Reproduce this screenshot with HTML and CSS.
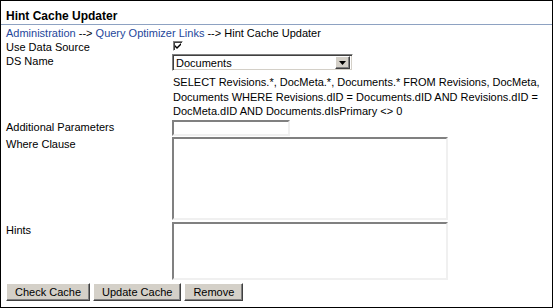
FILE: index.html
```html
<!DOCTYPE html>
<html lang="en">
<head>
	<meta charset="UTF-8">
	<title>Hint Cache Updater</title>
	<link rel="stylesheet" href="styles.css">
</head>
<body class="body">
	<div class="frame">
		<h1 class="title">Hint Cache Updater</h1>
		<form class="form">
			<div class="crumbs">
				<a class="link" href="#">Administration</a> --&gt; <a class="link" href="#">Query Optimizer Links</a> --&gt; Hint Cache Updater
			</div>

			<label class="label row-check">Use Data Source</label>
			<div class="field row-check">
				<span class="check">
					<svg width="7" height="7" viewBox="0 0 7 7"><path d="M0 2 L2 4 L6 0 L6 2 L2 6 L0 4 Z" fill="#000"/></svg>
				</span>
			</div>

			<label class="label row-ds">DS Name</label>
			<div class="field row-ds">
				<div class="select">
					<span class="select__text">Documents</span>
					<span class="select__btn">
						<svg width="7" height="4" viewBox="0 0 7 4"><path d="M0 0 H7 L3.5 4 Z" fill="#000"/></svg>
					</span>
				</div>
			</div>

			<div class="label row-sql"></div>
			<p class="sql row-sql">SELECT Revisions.*, DocMeta.*, Documents.* FROM Revisions, DocMeta, Documents WHERE Revisions.dID = Documents.dID AND Revisions.dID = DocMeta.dID AND Documents.dIsPrimary &lt;&gt; 0</p>

			<label class="label row-params">Additional Parameters</label>
			<div class="field row-params"><input class="input" type="text"></div>

			<label class="label row-where">Where Clause</label>
			<div class="field row-where"><textarea class="textarea textarea--where"></textarea></div>

			<label class="label row-hints">Hints</label>
			<div class="field row-hints"><textarea class="textarea textarea--hints"></textarea></div>

			<div class="buttons">
				<button class="button" type="button">Check Cache</button>
				<button class="button" type="button">Update Cache</button>
				<button class="button" type="button">Remove</button>
			</div>
		</form>
	</div>
</body>
</html>
```

FILE: styles.css
```css
*,
*::before,
*::after {
	box-sizing: border-box;
}

.body {
	margin: 0;
	background: #fff;
	color: #000;
	font-family: Tahoma, "Liberation Sans", Arial, sans-serif;
	font-size: 11px;
}

.frame {
	width: 553px;
	height: 308px;
	border: 1px solid #000;
	overflow: hidden;
}

.title {
	margin: 0;
	height: 24px;
	padding: 8px 0 0 5px;
	font-size: 12px;
	font-weight: bold;
	line-height: 14px;
	border-bottom: 1px solid #8ea2c2;
}

.form {
	display: grid;
	grid-template-columns: 166px 1fr;
	padding: 1px 0 0 5px;
	line-height: 14px;
}

.crumbs {
	grid-column: 1 / -1;
	height: 14px;
}

.link {
	color: #25479b;
	text-decoration: none;
}

.label {
	display: block;
}

.field {
	display: flex;
}

.row-check { height: 13px; }
.row-ds { height: 19px; }
.row-sql { height: 47px; }
.row-params { height: 17px; }
.row-where { height: 85px; }
.row-hints { height: 61px; }

.row-check .check {
	margin: 1px 0 0 1px;
	width: 10px;
	height: 10px;
	border: 1px solid;
	border-color: #808080 #fff #fff #808080;
	box-shadow: inset 1px 1px 0 #404040;
	background: #fff;
	display: flex;
	align-items: center;
	justify-content: center;
}

.row-ds.label,
.row-params.label,
.row-where.label {
	padding-top: 1px;
}

.row-hints.label {
	padding-top: 2px;
}

.select {
	width: 181px;
	height: 17px;
	margin-top: 1px;
	display: flex;
	justify-content: space-between;
	border: 1px solid;
	border-color: #808080 #fff #fff #808080;
	box-shadow: inset 1px 1px 0 #404040, inset -1px -1px 0 #d4d0c8;
	background: #fff;
	padding: 2px 2px 2px 3px;
}

.select__text {
	font-size: 11px;
	line-height: 12px;
}

.select__btn {
	width: 15px;
	height: 13px;
	margin-top: -1px;
	background: #d4d0c8;
	border: 1px solid;
	border-color: #fff #404040 #404040 #fff;
	box-shadow: inset -1px -1px 0 #808080;
	display: flex;
	align-items: center;
	justify-content: center;
}

.sql {
	margin: 0;
	padding: 3px 8px 0 1px;
	line-height: 14.5px;
}

.input,
.textarea {
	display: block;
	margin: 0;
	padding: 0;
	border: 2px solid;
	border-color: #808080 #f0f0f0 #f0f0f0 #808080;
	background: #fff;
	resize: none;
	font: inherit;
}

.input {
	width: 118px;
	height: 16px;
	margin-top: 1px;
}

.textarea--where {
	width: 276px;
	height: 83px;
	margin-top: 1px;
}

.textarea--hints {
	width: 276px;
	height: 58px;
	margin-top: 1px;
}

.buttons {
	grid-column: 1 / -1;
	display: flex;
	gap: 3px;
	padding-top: 1px;
}

.button {
	height: 18px;
	margin: 0;
	padding: 0 8px;
	background: #d4d0c8;
	border: 1px solid;
	border-color: #fff #404040 #404040 #fff;
	box-shadow: inset -1px -1px 0 #808080;
	font: inherit;
	font-size: 11px;
	line-height: 14px;
	color: #000;
}
```
